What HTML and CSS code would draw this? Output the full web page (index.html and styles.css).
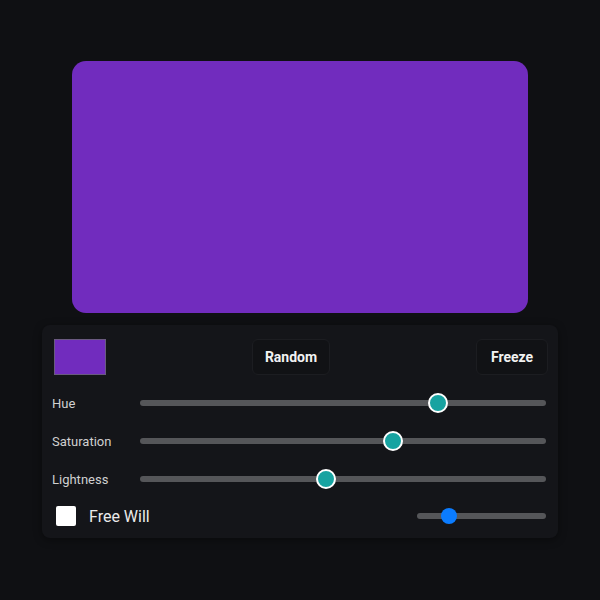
FILE: index.html
```html
<!DOCTYPE html>
<html>
<head>
<meta charset="utf-8">
<link rel="stylesheet" href="styles.css">
</head>
<body>
<div class="page">
  <div class="preview"></div>
  <div class="panel">
    <div class="top-row">
      <div class="swatch"></div>
      <button class="btn">Random</button>
      <button class="btn">Freeze</button>
    </div>
    <div class="slider-row">
      <span class="label">Hue</span>
      <div class="track"><div class="thumb" style="left: 289px"></div></div>
    </div>
    <div class="slider-row">
      <span class="label">Saturation</span>
      <div class="track"><div class="thumb" style="left: 244px"></div></div>
    </div>
    <div class="slider-row">
      <span class="label">Lightness</span>
      <div class="track"><div class="thumb" style="left: 177px"></div></div>
    </div>
    <div class="will-row">
      <div class="check"></div>
      <span class="will-label">Free Will</span>
      <div class="mini-track"><div class="mini-thumb" style="left: 24px"></div></div>
    </div>
  </div>
</div>
</body>
</html>
```
FILE: styles.css
```css
html, body {
  margin: 0;
  padding: 0;
  background: #0f1013;
  font-family: Roboto, "Liberation Sans", sans-serif;
}
.page {
  width: 600px;
  height: 600px;
  display: flex;
  flex-direction: column;
  align-items: center;
  padding-top: 61px;
  box-sizing: border-box;
}
.preview {
  width: 456px;
  height: 252px;
  background: #712cbe;
  border-radius: 14px;
}
.panel {
  margin-top: 12px;
  width: 516px;
  box-sizing: border-box;
  background: #141519;
  border-radius: 8px;
  padding: 14px 10px 4px 12px;
  box-shadow: 0 2px 8px rgba(0,0,0,0.4);
}
.top-row {
  display: flex;
  justify-content: space-between;
  align-items: center;
  height: 36px;
}
.swatch {
  width: 50px;
  height: 34px;
  background: #712cbe;
  border: 1px solid #6a5a80;
}
.btn {
  height: 36px;
  min-width: 72px;
  padding: 0 12px;
  background: #111215;
  border: 1px solid #1c1d21;
  border-radius: 6px;
  color: #f2f2f2;
  font-family: Roboto, "Liberation Sans", sans-serif;
  font-weight: 700;
  font-size: 14px;
}
.slider-row {
  display: flex;
  align-items: center;
  height: 38px;
  margin-right: 2px;
}
.top-row + .slider-row { margin-top: 9px; }
.label {
  width: 86px;
  margin-left: -2px;
  margin-right: 2px;
  color: #d0d0d0;
  font-size: 13px;
}
.track {
  position: relative;
  flex: 1;
  height: 6px;
  border-radius: 3px;
  background: #555659;
}
.thumb {
  position: absolute;
  top: -7px;
  width: 16px;
  height: 16px;
  border-radius: 50%;
  background: #17a3a1;
  border: 2px solid #ffffff;
  box-sizing: content-box;
  margin-left: -1px;
}
.will-row {
  display: flex;
  align-items: center;
  height: 36px;
  margin-right: 2px;
}
.check {
  width: 20px;
  height: 20px;
  background: #ffffff;
  border-radius: 2px;
  margin-left: 2px;
}
.will-label {
  margin-left: 13px;
  color: #eaeaea;
  font-size: 16px;
  flex: 1;
}
.mini-track {
  position: relative;
  width: 129px;
  height: 6px;
  border-radius: 3px;
  background: #555659;
}
.mini-thumb {
  position: absolute;
  top: -5px;
  width: 16px;
  height: 16px;
  border-radius: 50%;
  background: #0b7cff;
}
```
